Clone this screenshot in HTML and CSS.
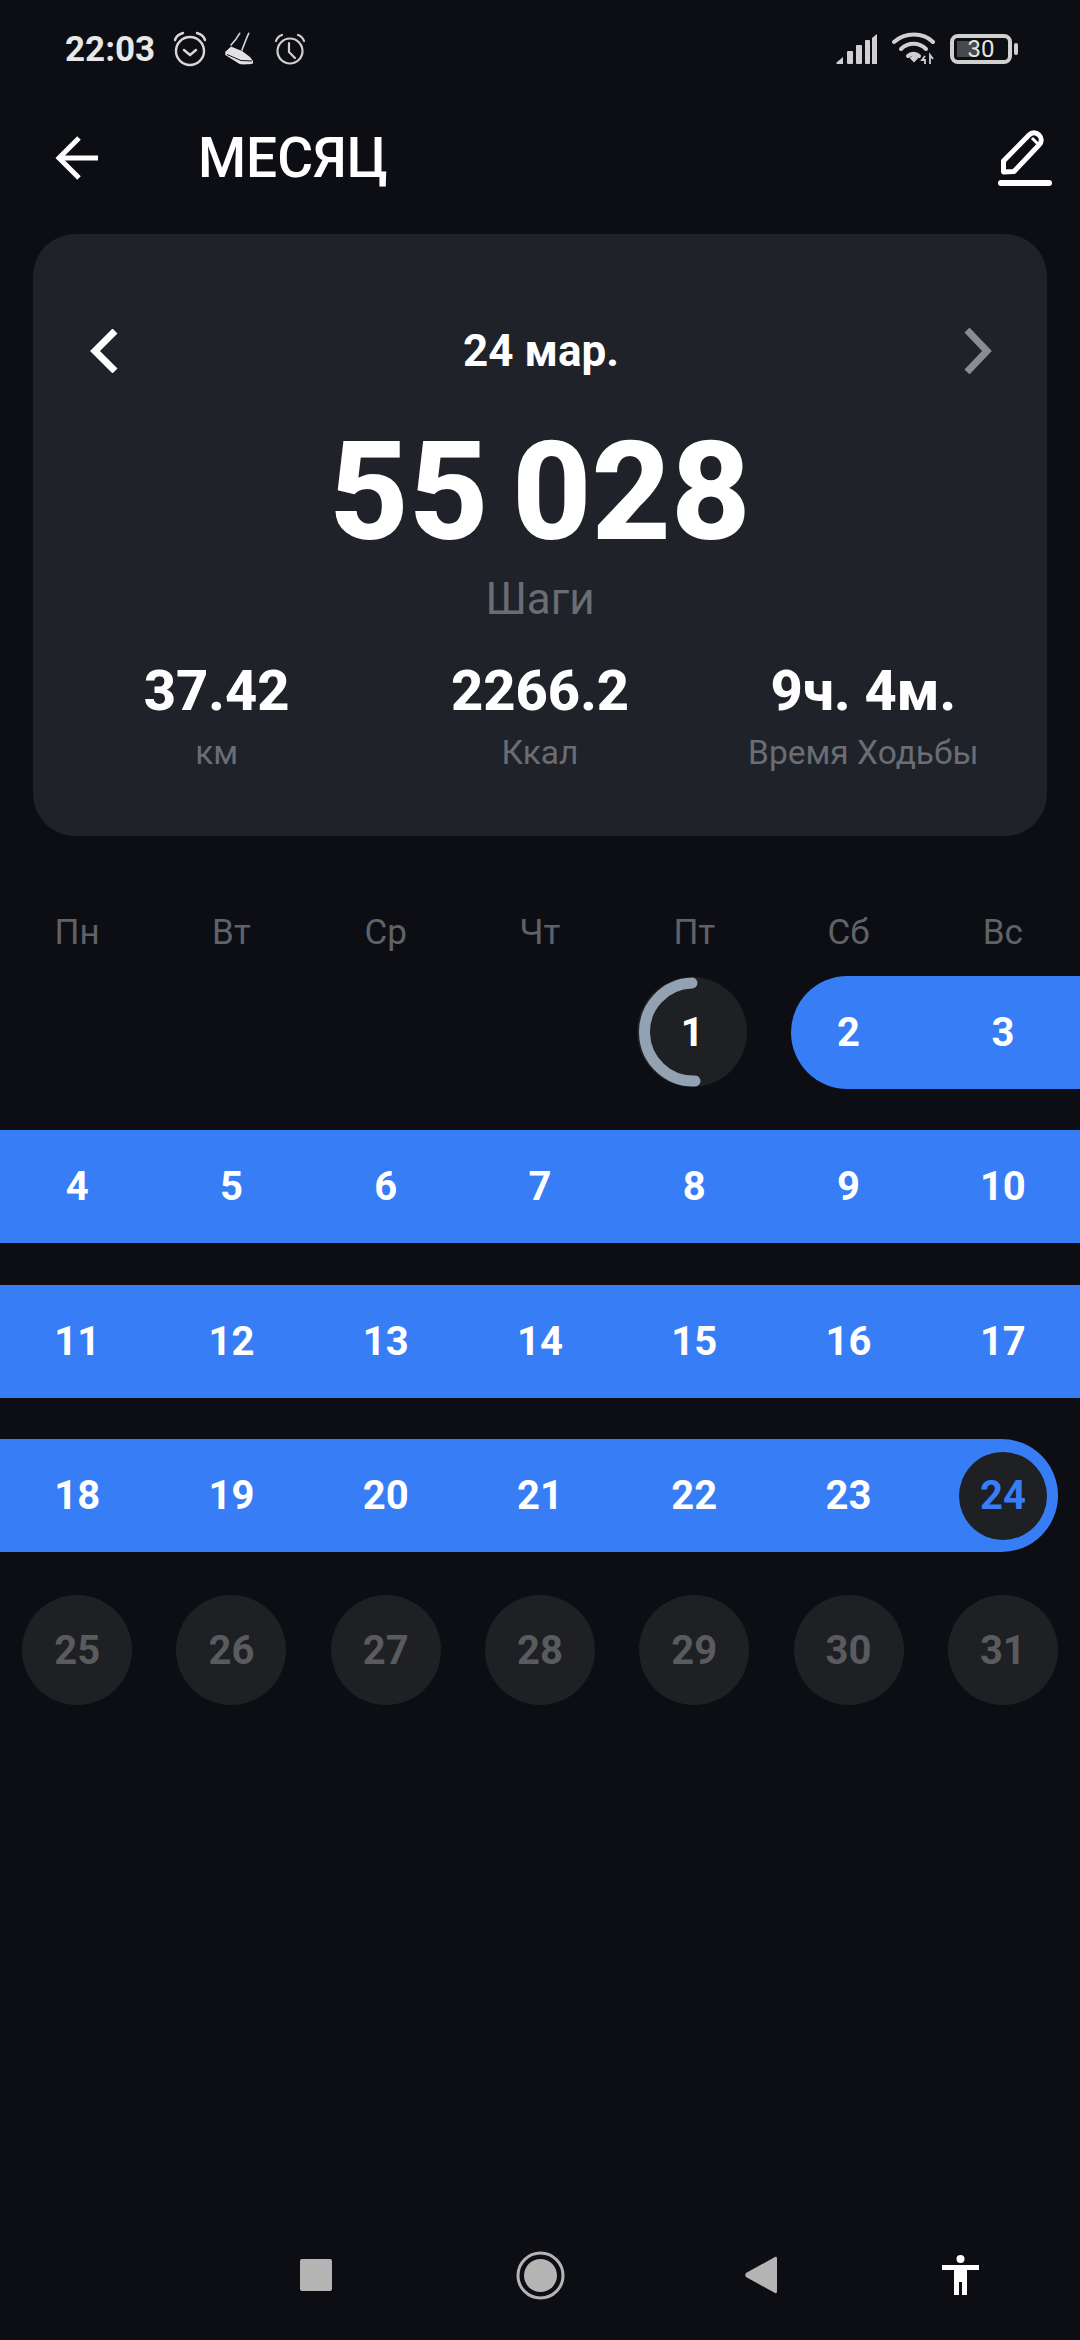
FILE: index.html
```html
<!DOCTYPE html>
<html lang="ru">
<head>
  <meta charset="UTF-8">
  <meta name="viewport" content="width=device-width, initial-scale=1.0">
  <title>Месяц</title>
  <link rel="stylesheet" href="styles.css">
</head>
<body>
  <div class="page">
    <div class="status">
      <div class="status-left">
        <span class="time">22:03</span>
        <svg class="ic-alarm1" width="34" height="36" viewBox="0 0 34 36" fill="none" stroke="#d8d8d8" stroke-width="2.4" stroke-linecap="round" stroke-linejoin="round">
          <circle cx="17" cy="20" r="14"/>
          <path d="M11 19l6 5 6-5"/>
          <path d="M2 9c1-3 4-6 8-7"/>
          <path d="M32 9c-1-3-4-6-8-7"/>
        </svg>
        <svg class="ic-shoe" width="32" height="34" viewBox="0 0 32 34" fill="none">
          <path d="M16.7 1.3C14 6 11 10 8 13M25.7 1.3C23 7 21 13 19 18" stroke="#d8d8d8" stroke-width="1.6" stroke-linecap="round"/>
          <path d="M2.3 19.7L8 14.5c4 2 8 3 11 4.5l8 6 3 4v2.500c-4 1-9 1-13 .8L2.300 23z" fill="#e2e2e2"/>
          <path d="M4 22.500l14 6 11 .5" stroke="#0d0f14" stroke-width="1"/>
        </svg>
        <svg class="ic-alarm2" width="32" height="32" viewBox="0 0 32 32" fill="none" stroke="#d0d0d0" stroke-width="2.200" stroke-linecap="round" stroke-linejoin="round">
          <circle cx="16" cy="18" r="12.500"/>
          <path d="M15 10v9l6 6"/>
          <path d="M2 8c1-3 3-5 6-6"/>
          <path d="M30 8c-1-3-3-5-6-6"/>
        </svg>
      </div>
      <div class="status-right">
        <svg width="41" height="30" viewBox="0 0 41 30" fill="#d0d0d0">
          <path d="M0 29l7-6v7H1z"/>
          <rect x="11" y="17" width="6" height="13" rx="1"/>
          <rect x="20" y="11" width="6" height="19" rx="1"/>
          <rect x="29" y="6" width="5" height="24" rx="1"/>
          <path d="M36 4l5-4v30h-5z"/>
        </svg>
        <svg class="ic-wifi" width="44" height="34" viewBox="0 0 44 34" fill="none" stroke="#d0d0d0" stroke-width="4" stroke-linecap="round">
          <path d="M2 10c11-10 29-10 39 0"/>
          <path d="M9 17c7-7 18-7 25 0"/>
          <path d="M16 24c3-3 8-3 11 0"/>
          <path d="M19 26l3-2 3 2-3 3z" fill="#d0d0d0" stroke-width="2"/>
          <path d="M33 24l-3 4 3 0v4M38 32v-9l3 4" stroke-width="1.800" stroke-linecap="butt"/>
        </svg>
        <span class="battery">30</span>
        <span class="battery-tip"></span>
      </div>
    </div>

    <div class="topbar">
      <svg class="ic-back" width="44" height="46" viewBox="0 0 44 46" fill="none" stroke="#fff" stroke-width="5">
        <path d="M43 23H4"/>
        <path d="M24 3L4 23l20 20"/>
      </svg>
      <h1 class="title">МЕСЯЦ</h1>
      <svg class="ic-edit" width="58" height="60" viewBox="0 0 58 60" fill="none" stroke="#fff" stroke-width="5" stroke-linejoin="round">
        <path d="M7.500 44V33L33 7c3-3 7-3 10 0s3 7 0 10L18 43.500z"/>
        <path d="M36 10l7 7" stroke-width="3"/>
        <path d="M5 55h48" stroke-width="6" stroke-linecap="round"/>
      </svg>
    </div>

    <section class="card">
      <div class="date-row">
        <svg width="28" height="44" viewBox="0 0 28 44" fill="none" stroke="#fff" stroke-width="7"><path d="M25 2L5 22l20 20"/></svg>
        <span class="date">24 мар.</span>
        <svg class="next" width="28" height="46" viewBox="0 0 28 46" fill="none" stroke="#8a8c90" stroke-width="7"><path d="M3 2l20 21L3 44"/></svg>
      </div>
      <div class="steps">55 028</div>
      <div class="steps-label">Шаги</div>
      <div class="stats">
        <div class="stat">
          <div class="stat-value">37.42</div>
          <div class="stat-label">км</div>
        </div>
        <div class="stat">
          <div class="stat-value">2266.2</div>
          <div class="stat-label">Ккал</div>
        </div>
        <div class="stat">
          <div class="stat-value">9ч. 4м.</div>
          <div class="stat-label">Время Ходьбы</div>
        </div>
      </div>
    </section>

    <div class="weekdays">
      <span>Пн</span><span>Вт</span><span>Ср</span><span>Чт</span><span>Пт</span><span>Сб</span><span>Вс</span>
    </div>

    <div class="month">
      <div class="cell"></div>
      <div class="cell"></div>
      <div class="cell"></div>
      <div class="cell"></div>
      <div class="cell"><div class="day first">
        <svg class="ring" width="110" height="110" viewBox="0 0 110 110" fill="none" stroke="#93a2b3" stroke-width="11" stroke-linecap="round"><path d="M55 6A49 49 0 0 0 58 104"/></svg>
        1</div></div>
      <div class="cell"><div class="day range range-start">2</div></div>
      <div class="cell"><div class="day range">3</div></div>

      <div class="cell"><div class="day range">4</div></div>
      <div class="cell"><div class="day range">5</div></div>
      <div class="cell"><div class="day range">6</div></div>
      <div class="cell"><div class="day range">7</div></div>
      <div class="cell"><div class="day range">8</div></div>
      <div class="cell"><div class="day range">9</div></div>
      <div class="cell"><div class="day range">10</div></div>

      <div class="cell"><div class="day range">11</div></div>
      <div class="cell"><div class="day range">12</div></div>
      <div class="cell"><div class="day range">13</div></div>
      <div class="cell"><div class="day range">14</div></div>
      <div class="cell"><div class="day range">15</div></div>
      <div class="cell"><div class="day range">16</div></div>
      <div class="cell"><div class="day range">17</div></div>

      <div class="cell"><div class="day range">18</div></div>
      <div class="cell"><div class="day range">19</div></div>
      <div class="cell"><div class="day range">20</div></div>
      <div class="cell"><div class="day range">21</div></div>
      <div class="cell"><div class="day range">22</div></div>
      <div class="cell"><div class="day range">23</div></div>
      <div class="cell"><div class="day range range-end"><span class="today">24</span></div></div>

      <div class="cell"><div class="day future">25</div></div>
      <div class="cell"><div class="day future">26</div></div>
      <div class="cell"><div class="day future">27</div></div>
      <div class="cell"><div class="day future">28</div></div>
      <div class="cell"><div class="day future">29</div></div>
      <div class="cell"><div class="day future">30</div></div>
      <div class="cell"><div class="day future">31</div></div>
    </div>

    <div class="navbar">
      <svg class="nav-square" width="32" height="32" viewBox="0 0 32 32" fill="#b4b4b4"><rect width="32" height="32" rx="2"/></svg>
      <svg class="nav-home" width="49" height="49" viewBox="0 0 49 49" fill="#b4b4b4"><circle cx="24.500" cy="24.500" r="16.500"/><circle cx="24.500" cy="24.500" r="22.500" fill="none" stroke="#b4b4b4" stroke-width="3"/></svg>
      <svg class="nav-back" width="32" height="38" viewBox="0 0 32 38" fill="#b4b4b4"><path d="M30 1c1-.5 2 0 2 1.500v33c0 1.500-1 2-2 1.500L1 21c-1-1-1-3 0-4z"/></svg>
      <svg class="nav-person" width="37" height="40" viewBox="0 0 37 40" fill="#fff"><ellipse cx="18.500" cy="4" rx="4" ry="4"/><path d="M0 10h37v5H25v25h-5V27h-3v13h-5V15H0z"/></svg>
    </div>
  </div>
</body>
</html>
```

FILE: styles.css
```css
* {
  box-sizing: border-box;
}
body {
  margin: 0;
  background: #0c0e13;
  font-family: Roboto, "Noto Sans", sans-serif;
  color: #fff;
}
.page {
  display: flex;
  flex-direction: column;
  height: 2340px;
  overflow: hidden;
}

/* status bar */
.status {
  display: flex;
  justify-content: space-between;
  align-items: center;
  height: 98px;
  padding: 0 62px 0 65px;
}
.status-left, .status-right {
  display: flex;
  align-items: center;
}
.time {
  font-size: 35px;
  font-weight: 700;
  color: #e8e8e8;
  margin-right: 18px;
}
.ic-shoe {
  margin-left: 16px;
}
.ic-alarm2 {
  margin-left: 19px;
}
.ic-wifi {
  margin-left: 15px;
}
.battery {
  width: 62px;
  height: 30px;
  margin-left: 14px;
  border: 4px solid #d0d0d0;
  border-radius: 8px;
  background: linear-gradient(#47494e, #47494e) no-repeat 3px center / 20px 16px;
  font-size: 24px;
  line-height: 22px;
  text-align: center;
  color: #e4e4e4;
}
.battery-tip {
  width: 4px;
  height: 12px;
  margin-left: 2px;
  border-radius: 2px;
  background: #d0d0d0;
}

/* top bar */
.topbar {
  display: flex;
  align-items: center;
  height: 136px;
  padding: 0 26px 16px 55px;
}
.title {
  margin: 0 0 0 99px;
  font-size: 55px;
  font-weight: 500;
  line-height: 1;
  flex: 1;
}

/* summary card */
.card {
  height: 602px;
  margin: 0 33px;
  padding: 87px 22px 0;
  border-radius: 42px;
  background: #1f2229;
}
.date-row {
  display: flex;
  justify-content: space-between;
  align-items: center;
  height: 60px;
  padding: 0 35px;
}
.date {
  font-size: 44px;
  font-weight: 700;
}
.next {
  margin-right: -2px;
}
.steps {
  margin-top: 41px;
  font-size: 138px;
  font-weight: 800;
  line-height: 140px;
  word-spacing: -11px;
  text-align: center;
}
.steps-label {
  margin-top: 12px;
  font-size: 44px;
  line-height: 50px;
  text-align: center;
  color: #6a6d73;
}
.stats {
  display: grid;
  grid-template-columns: repeat(3, 1fr);
  margin-top: 37px;
  text-align: center;
}
.stat-value {
  font-size: 56px;
  font-weight: 800;
  line-height: 60px;
}
.stat-label {
  margin-top: 12px;
  font-size: 33.500px;
  line-height: 40px;
  color: #6a6d73;
}

/* calendar */
.weekdays {
  display: grid;
  grid-template-columns: repeat(7, 1fr);
  height: 44px;
  margin-top: 75px;
  font-size: 35px;
  line-height: 44px;
  text-align: center;
  color: #5f6268;
}
.month {
  display: grid;
  grid-template-columns: repeat(7, 1fr);
  grid-auto-rows: 154.5px;
}
.cell {
  display: flex;
  align-items: center;
  justify-content: center;
}
.day {
  display: flex;
  align-items: center;
  justify-content: center;
  position: relative;
  width: 110px;
  height: 110px;
  border-radius: 50%;
  font-size: 40px;
  font-weight: 700;
}
.first, .future {
  background: #1e2024;
}
.first {
  margin-right: 4px;
}
.future {
  color: #5a5b5e;
}
.ring {
  position: absolute;
  left: 0;
  top: 0;
}
.range {
  width: 100%;
  height: 113px;
  border-radius: 0;
  background: #377df6;
}
.range-start {
  margin-left: 20px;
  padding-right: 20px;
  border-radius: 57px 0 0 57px;
}
.range-end {
  margin-right: 22px;
  justify-content: flex-end;
  padding-right: 11px;
  border-radius: 0 57px 57px 0;
}
.today {
  display: flex;
  align-items: center;
  justify-content: center;
  width: 88px;
  height: 88px;
  border-radius: 50%;
  background: #1e2024;
  color: #377df6;
}

/* bottom navigation */
.navbar {
  display: flex;
  align-items: center;
  height: 130px;
  margin-top: auto;
  padding-left: 300px;
}
.nav-home {
  margin-left: 184px;
}
.nav-back {
  margin-left: 180px;
}
.nav-person {
  margin-left: 165px;
}
```
